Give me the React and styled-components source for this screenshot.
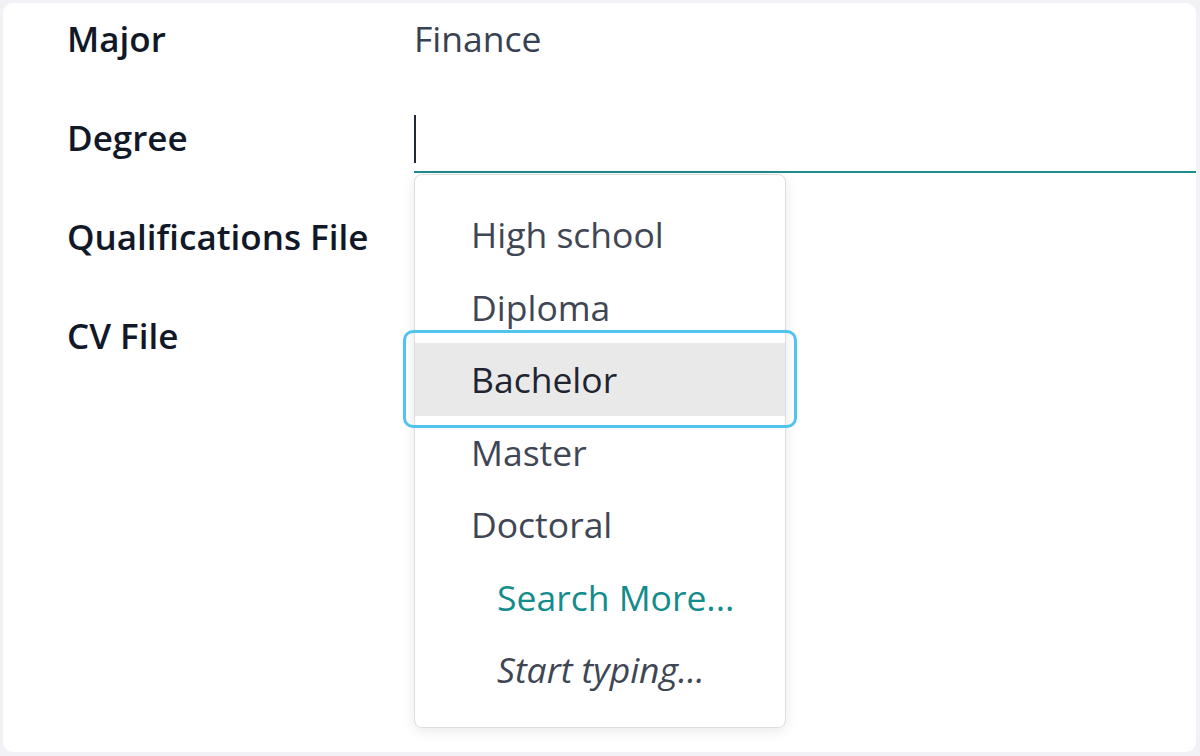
import React from "react";
import styled, { createGlobalStyle } from "styled-components";

const Global = createGlobalStyle`
  html, body { margin: 0; padding: 0; background: #f2f1f6; }
  body { font-family: "Open Sans", "Noto Sans", sans-serif; }
  #root { height: 756px; padding: 3px 4px 4px 3px; box-sizing: border-box; }
`;

const Card = styled.div`
  height: 749px;
  width: 1193px;
  background: #ffffff;
  border-radius: 10px;
  box-sizing: border-box;
  padding: 11px 0 0 64px;
`;

const Form = styled.div`
  display: grid;
  grid-template-columns: 347px 1fr;
  grid-auto-rows: 99px;
`;

const Label = styled.div`
  font-size: 35px;
  font-weight: 600;
  line-height: 49px;
  color: #111827;
  white-space: nowrap;
`;

const Value = styled.div`
  font-size: 35.5px;
  line-height: 49px;
  color: #374151;
`;

const InputWrap = styled.div`
  position: relative;
  height: 58px;
  border-bottom: 2px solid #1f8b8d;
  display: flex;
  align-items: flex-start;
`;

const Caret = styled.span`
  display: block;
  width: 2px;
  height: 48px;
  margin-top: 2px;
  background: #1f2937;
`;

const Dropdown = styled.div`
  position: absolute;
  top: calc(100% + 3px);
  left: 0;
  width: 372px;
  box-sizing: border-box;
  background: #ffffff;
  border: 1px solid #dcdde1;
  border-radius: 8px;
  box-shadow: 0 3px 14px rgba(0, 0, 0, 0.09);
  padding: 23px 0 21px;
  z-index: 2;
`;

const Item = styled.div`
  position: relative;
  height: 72.5px;
  line-height: 72.5px;
  font-size: 35.5px;
  padding-left: ${(p) => (p.$indent ? 82 : 56)}px;
  color: ${(p) => (p.$link ? "#148c8c" : p.$active ? "#1f2430" : "#3f4654")};
  font-style: ${(p) => (p.$italic ? "italic" : "normal")};
  background: ${(p) => (p.$active ? "#e9e9ea" : "transparent")};
  white-space: nowrap;
`;

const Focus = styled.span`
  position: absolute;
  top: -13px;
  bottom: -12px;
  left: -12px;
  right: -12px;
  border: 3px solid #4fc5ed;
  border-radius: 10px;
  pointer-events: none;
`;

const options = ["High school", "Diploma", "Bachelor", "Master", "Doctoral"];

export default function App() {
  return (
    <>
      <Global />
      <Card>
        <Form>
          <Label>Major</Label>
          <Value>Finance</Value>
          <Label>Degree</Label>
          <InputWrap>
            <Caret />
            <Dropdown>
              {options.map((o) => (
                <Item key={o} $active={o === "Bachelor"}>
                  {o}
                  {o === "Bachelor" && <Focus />}
                </Item>
              ))}
              <Item $indent $link>Search More...</Item>
              <Item $indent $italic>Start typing...</Item>
            </Dropdown>
          </InputWrap>
          <Label>Qualifications File</Label>
          <div />
          <Label>CV File</Label>
          <div />
        </Form>
      </Card>
    </>
  );
}
